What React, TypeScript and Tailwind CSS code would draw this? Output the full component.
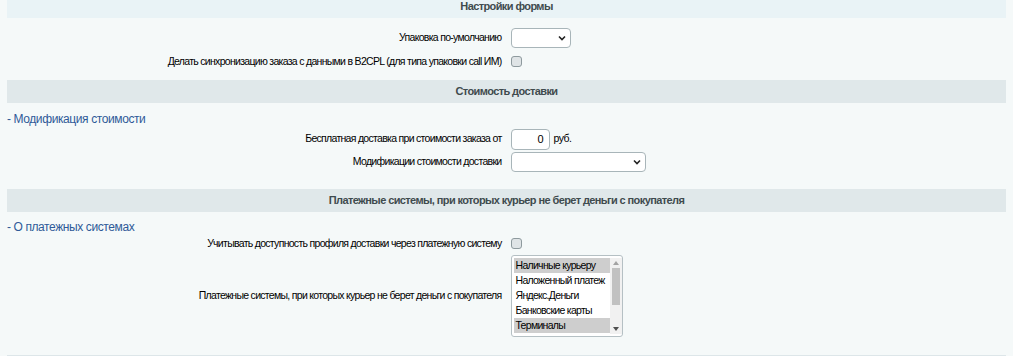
const font = { fontFamily: '"Liberation Sans", Arial, sans-serif' };

function Header({ children, light }: { children: React.ReactNode; light?: boolean }) {
  return (
    <div
      className={`flex h-[23px] items-center justify-center text-[11px] font-bold tracking-[-0.6px] text-[#3f4b4e] ${
        light ? "bg-[#e9f3f6]" : "bg-[#e0e8ea]"
      }`}
    >
      {children}
    </div>
  );
}

function Row({
  label,
  children,
  className = "",
}: {
  label: string;
  children: React.ReactNode;
  className?: string;
}) {
  return (
    <div className={`flex items-center ${className}`}>
      <div className="w-1/2 pr-[5px] text-right text-[10.5px] tracking-[-0.7px] text-[#000]">{label}</div>
      <div className="flex w-1/2 items-center pl-[4px]">{children}</div>
    </div>
  );
}

function Select({ w }: { w: string }) {
  return (
    <div
      className={`flex h-[20px] ${w} items-center justify-end rounded-[4px] border border-[#a8b5b9] bg-white pr-[4px]`}
    >
      <svg width="8" height="6" viewBox="0 0 8 6">
        <path d="M1 1.5 L4 4.5 L7 1.5" fill="none" stroke="#222" strokeWidth="1.6" />
      </svg>
    </div>
  );
}

function Check() {
  return (
    <span className="inline-block h-[11px] w-[11px] rounded-[3px] border border-[#8e9a9e] bg-[#dfe4e6]" />
  );
}

export default function App() {
  const opts = [
    { t: "Наличные курьеру", sel: true },
    { t: "Наложенный платеж", sel: false },
    { t: "Яндекс.Деньги", sel: false },
    { t: "Банковские карты", sel: false },
    { t: "Терминалы", sel: true },
  ];
  return (
    <div className="h-[361px] w-[1013px] bg-[#f5f9f9]" style={font}>
      <div className="mx-[7px] border-b-2 border-[#dde6e9] pb-[18px]">
        <div className="-mt-[5px]">
          <Header light>Настройки формы</Header>
        </div>

        <Row label="Упаковка по-умолчанию" className="mt-[10px]">
          <Select w="w-[60px]" />
        </Row>
        <Row label="Делать синхронизацию заказа с данными в B2CPL (для типа упаковки call ИМ)" className="mt-[6px]">
          <Check />
        </Row>

        <div className="mt-[10px]">
          <Header>Стоимость доставки</Header>
        </div>
        <div className="mt-[7px] text-[12px] tracking-[-0.4px] text-[#2f5a98]">- Модификация стоимости</div>
        <Row label="Бесплатная доставка при стоимости заказа от" className="mt-[1px]">
          <div className="flex h-[21px] w-[39px] items-center justify-end rounded-[4px] border border-[#a8b5b9] bg-white pr-[5px] text-[11px]">
            0
          </div>
          <span className="ml-[4px] text-[10.5px] tracking-[-0.5px]">руб.</span>
        </Row>
        <Row label="Модификации стоимости доставки" className="mt-[2px]">
          <Select w="w-[135px]" />
        </Row>

        <div className="mt-[17px]">
          <Header>Платежные системы, при которых курьер не берет деньги с покупателя</Header>
        </div>
        <div className="mt-[6px] text-[12px] tracking-[-0.4px] text-[#2f5a98]">- О платежных системах</div>
        <Row label="Учитывать доступность профиля доставки через платежную систему">
          <Check />
        </Row>
        <Row label="Платежные системы, при которых курьер не берет деньги с покупателя" className="mt-[3px]">
          <div className="flex h-[82px] w-[112px] rounded-[3px] border border-[#b5c0c4] bg-white py-[2px] pl-[2px]">
            <div className="flex flex-1 flex-col">
              {opts.map((o) => (
                <div
                  key={o.t}
                  className={`h-[15px] whitespace-nowrap pl-[2px] text-[10.5px] leading-[15px] tracking-[-0.7px] ${
                    o.sel ? "bg-[#cecece]" : ""
                  }`}
                >
                  {o.t}
                </div>
              ))}
            </div>
            <div className="flex w-[12px] flex-col items-center bg-[#f1f1f1] py-[3px]">
              <svg width="6" height="4" viewBox="0 0 6 4">
                <path d="M0 4 L3 0 L6 4 Z" fill="#a3a3a3" />
              </svg>
              <div className="mt-[3px] h-[37px] w-[8px] bg-[#c1c1c1]" />
              <div className="flex-1" />
              <svg width="6" height="4" viewBox="0 0 6 4">
                <path d="M0 0 L3 4 L6 0 Z" fill="#505050" />
              </svg>
            </div>
          </div>
        </Row>
      </div>
    </div>
  );
}
